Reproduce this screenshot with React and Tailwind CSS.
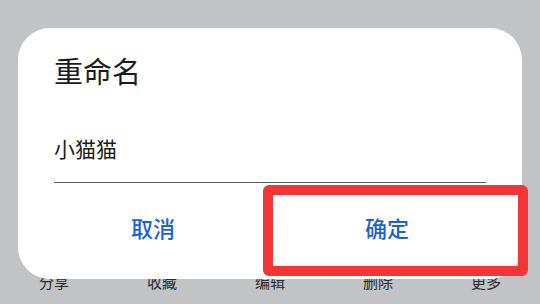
import React from 'react';

const tabs = ['分享', '收藏', '编辑', '删除', '更多'];

export default function App() {
  return (
    <div
      className="relative w-[540px] h-[304px] overflow-hidden bg-[#c2c3c5] flex flex-col justify-end font-['Noto_Sans_CJK_SC',sans-serif]"
    >
      {/* bottom toolbar, mostly hidden under the dialog */}
      <div className="grid grid-cols-5 pb-[15px]">
        {tabs.map((t) => (
          <div key={t} className="text-center text-[15px] leading-none text-[#2b2b2b]">
            {t}
          </div>
        ))}
      </div>

      {/* rename dialog */}
      <div className="absolute left-[18px] top-[28px] w-[504px] h-[251px] rounded-[32px] bg-white flex flex-col">
        <div className="px-9 pt-[28px]">
          <h2 className="text-[29px] leading-none font-normal text-[#1c1c1c]">重命名</h2>
        </div>
        <div className="mx-9 mt-[53px] pb-[23px] border-b border-[#5a5a5a]">
          <div className="text-[21px] leading-none text-[#1c1c1c]">小猫猫</div>
        </div>
        <div className="flex-1 flex px-[18px] pb-[8px]">
          <button className="flex-1 flex items-center justify-center text-[22px] leading-none font-medium text-[#1b62d8]">
            取消
          </button>
          <button className="flex-1 flex items-center justify-center text-[22px] leading-none font-medium text-[#1b62d8]">
            确定
          </button>
        </div>
      </div>

      {/* highlight around the confirm button */}
      <div className="absolute left-[263px] top-[185px] w-[265px] h-[91px] border-[10px] border-[#f43535] rounded-[6px]" />
    </div>
  );
}
